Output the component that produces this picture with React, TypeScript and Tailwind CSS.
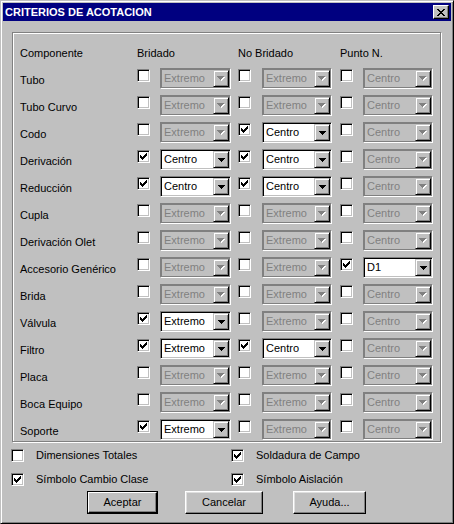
import React from 'react';

type Pick = { on: boolean; value: string; enabled: boolean };
type Row = { name: string; cols: Pick[] };

const CHECK = ['......x', '.....xx', 'x...xxx', 'xx.xxx.', 'xxxxx..', '.xxx...', '..x....'];
const CLOSE = ['xx....xx', '.xx..xx.', '..xxxx..', '...xx...', '..xxxx..', '.xx..xx.', 'xx....xx'];
const ARROW = ['xxxxxxx', '.xxxxx.', '..xxx..', '...x...'];

const Pixels = ({ rows, color }: { rows: string[]; color: string }) => (
  <svg width={rows[0].length} height={rows.length} shapeRendering="crispEdges" className="block">
    {rows.map((r, y) =>
      r.split('').map((c, x) => (c === 'x' ? <rect key={`${x}-${y}`} x={x} y={y} width={1} height={1} fill={color} /> : null))
    )}
  </svg>
);

const Checkbox = ({ on }: { on: boolean }) => (
  <span className="box-border flex h-[13px] w-[13px] items-center justify-center border border-t-[#808080] border-l-[#808080] border-b-white border-r-white bg-white shadow-[inset_1px_1px_0_#000,inset_-1px_-1px_0_#c0c0c0]">
    {on && <Pixels rows={CHECK} color="#000" />}
  </span>
);

const DropButton = ({ enabled }: { enabled: boolean }) => (
  <span className="box-border flex h-[17px] w-[16px] shrink-0 items-center justify-center border border-t-[#c0c0c0] border-l-[#c0c0c0] border-b-black border-r-black bg-[#c0c0c0] shadow-[inset_1px_1px_0_#fff,inset_-1px_-1px_0_#808080]">
    {enabled ? (
      <Pixels rows={ARROW} color="#000" />
    ) : (
      <span className="relative block h-[5px] w-[8px]">
        <span className="absolute left-[1px] top-[1px]">
          <Pixels rows={ARROW} color="#fff" />
        </span>
        <span className="absolute left-0 top-0">
          <Pixels rows={ARROW} color="#808080" />
        </span>
      </span>
    )}
  </span>
);

const Combo = ({ value, enabled, width }: { value: string; enabled: boolean; width: string }) =>
  enabled ? (
    <div className={`box-border flex h-[21px] ${width} border border-t-[#808080] border-l-[#808080] border-b-white border-r-white bg-white p-[1px] shadow-[inset_1px_1px_0_#000,inset_-1px_-1px_0_#c0c0c0]`}>
      <span className="flex-1 pl-[2px] leading-[17px] text-black">{value}</span>
      <DropButton enabled />
    </div>
  ) : (
    <div className={`box-border flex h-[21px] ${width} border border-t-[#808080] border-l-[#808080] border-b-white border-r-white bg-[#c0c0c0] p-[1px] shadow-[inset_0_0_0_1px_#808080]`}>
      <span className="flex-1 pl-[2px] leading-[17px] text-[#808080]">{value}</span>
      <DropButton enabled={false} />
    </div>
  );

const off = (value: string): Pick => ({ on: false, value, enabled: false });
const on = (value: string): Pick => ({ on: true, value, enabled: true });
const plain = (name: string): Row => ({ name, cols: [off('Extremo'), off('Extremo'), off('Centro')] });

const rows: Row[] = [
  plain('Tubo'),
  plain('Tubo Curvo'),
  { name: 'Codo', cols: [off('Extremo'), on('Centro'), off('Centro')] },
  { name: 'Derivación', cols: [on('Centro'), on('Centro'), off('Centro')] },
  { name: 'Reducción', cols: [on('Centro'), on('Centro'), off('Centro')] },
  plain('Cupla'),
  plain('Derivación Olet'),
  { name: 'Accesorio Genérico', cols: [off('Extremo'), off('Extremo'), on('D1')] },
  plain('Brida'),
  { name: 'Válvula', cols: [on('Extremo'), off('Extremo'), off('Centro')] },
  { name: 'Filtro', cols: [on('Extremo'), on('Centro'), off('Centro')] },
  plain('Placa'),
  plain('Boca Equipo'),
  { name: 'Soporte', cols: [on('Extremo'), off('Extremo'), off('Centro')] },
];

const widths = ['w-[71px]', 'w-[70px]', 'w-[70px]'];

const options = [
  { label: 'Dimensiones Totales', on: false },
  { label: 'Soldadura de Campo', on: true },
  { label: 'Símbolo Cambio Clase', on: true },
  { label: 'Símbolo Aislación', on: true },
];

const Button = ({ label, width, isDefault }: { label: string; width: string; isDefault?: boolean }) =>
  isDefault ? (
    <div className={`box-border h-[23px] ${width} border border-black`}>
      <div className="box-border flex h-full w-full items-center justify-center border border-t-white border-l-white border-b-black border-r-black shadow-[inset_-1px_-1px_0_#808080]">
        {label}
      </div>
    </div>
  ) : (
    <div className={`box-border flex h-[23px] ${width} items-center justify-center border border-t-white border-l-white border-b-black border-r-black shadow-[inset_-1px_-1px_0_#808080,inset_1px_1px_0_#dfdfdf]`}>
      {label}
    </div>
  );

export default function App() {
  return (
    <div className="box-border h-[524px] w-[454px] border border-t-[#c0c0c0] border-l-[#c0c0c0] border-b-black border-r-black bg-[#c0c0c0] p-[2px] text-[11px] leading-[13px] text-black shadow-[inset_1px_1px_0_#fff,inset_-1px_-1px_0_#808080] [font-family:'Liberation_Sans',Arial,sans-serif]">
      <div className="flex h-[18px] items-center justify-between bg-[#000080] pl-[2px] pr-[2px]">
        <span className="font-bold text-white">CRITERIOS DE ACOTACION</span>
        <span className="box-border flex h-[14px] w-[16px] items-center justify-center border border-t-white border-l-white border-b-black border-r-black bg-[#c0c0c0] shadow-[inset_-1px_-1px_0_#808080]">
          <Pixels rows={CLOSE} color="#000" />
        </span>
      </div>

      <div className="ml-[9px] mt-[11px] box-border h-[410px] w-[429px] border border-[#808080] pl-[7px] pt-[6px] shadow-[inset_1px_1px_0_#fff,1px_1px_0_#fff]">
        <div className="grid auto-rows-[27px] grid-cols-[117px_23px_78px_24px_78px_23px_70px]">
          <span className="pt-[8px]">Componente</span>
          <span className="col-span-2 pt-[8px]">Bridado</span>
          <span className="col-span-2 pt-[8px]">No Bridado</span>
          <span className="col-span-2 pt-[8px]">Punto N.</span>
          {rows.map((row) => (
            <React.Fragment key={row.name}>
              <span className="whitespace-nowrap pt-[8px]">{row.name}</span>
              {row.cols.map((c, i) => (
                <React.Fragment key={i}>
                  <div className="pt-[3px]">
                    <Checkbox on={c.on} />
                  </div>
                  <div className="pt-[2px]">
                    <Combo value={c.value} enabled={c.enabled} width={widths[i]} />
                  </div>
                </React.Fragment>
              ))}
            </React.Fragment>
          ))}
        </div>
      </div>

      <div className="ml-[8px] mt-[7px] grid grid-cols-[220px_1fr] gap-y-[11px]">
        {options.map((o) => (
          <div key={o.label} className="flex h-[13px] items-center gap-[12px]">
            <Checkbox on={o.on} />
            <span className="whitespace-nowrap">{o.label}</span>
          </div>
        ))}
      </div>

      <div className="mt-[5px] flex">
        <div className="ml-[84px]">
          <Button label="Aceptar" width="w-[71px]" isDefault />
        </div>
        <div className="ml-[27px]">
          <Button label="Cancelar" width="w-[78px]" />
        </div>
        <div className="ml-[30px]">
          <Button label="Ayuda..." width="w-[73px]" />
        </div>
      </div>
    </div>
  );
}
